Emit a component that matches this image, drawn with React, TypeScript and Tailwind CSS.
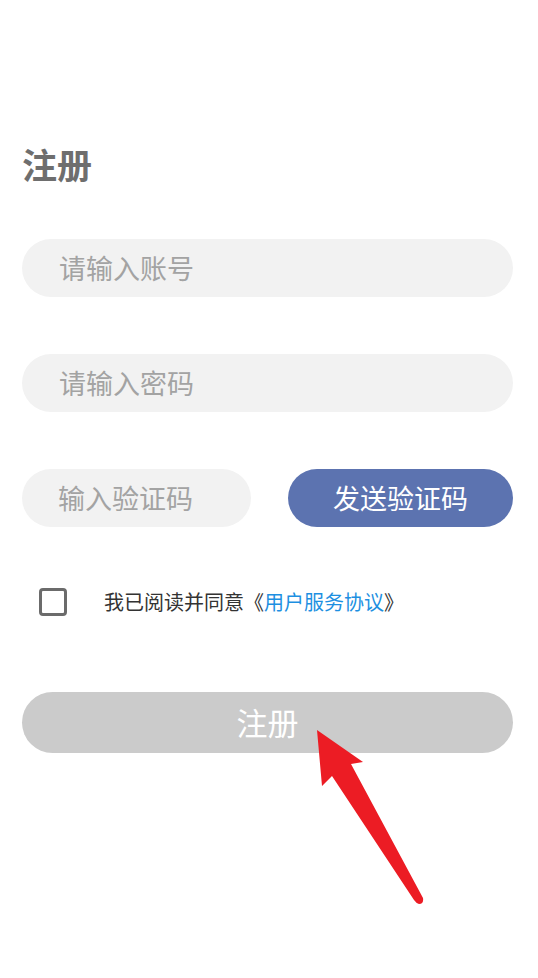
import React from "react";

const font = { fontFamily: '"Noto Sans CJK SC", "Noto Sans", sans-serif' };

export default function App() {
  return (
    <div className="relative w-[538px] h-[978px] bg-white overflow-hidden" style={font}>
      <div className="pl-[22px] pr-[25px] pt-[144px] flex flex-col">
        <div className="text-[35px] leading-[40px] font-bold text-[#6e6e6e]">注册</div>

        <div className="mt-[55px] h-[58px] rounded-full bg-[#f2f2f2] flex items-center pl-[37px] text-[27px] text-[#a3a3a3]">
          请输入账号
        </div>

        <div className="mt-[57px] h-[58px] rounded-full bg-[#f2f2f2] flex items-center pl-[37px] text-[27px] text-[#a3a3a3]">
          请输入密码
        </div>

        <div className="mt-[57px] flex gap-[37px]">
          <div className="w-[229px] h-[58px] rounded-full bg-[#f2f2f2] flex items-center pl-[36px] text-[27px] text-[#a3a3a3]">
            输入验证码
          </div>
          <div className="flex-1 h-[58px] rounded-full bg-[#5c73b0] flex items-center justify-center text-[27px] text-white">
            发送验证码
          </div>
        </div>

        <div className="mt-[61px] flex items-center h-[28px]">
          <div className="ml-[17px] w-[28px] h-[28px] rounded-[4px] border-[3px] border-[#6b6b6b]" />
          <div className="ml-[37px] text-[20px] text-[#333333] leading-[28px]">
            我已阅读并同意《<span className="text-[#1d8fe1]">用户服务协议</span>》
          </div>
        </div>

        <div className="mt-[76px] h-[61px] rounded-full bg-[#cbcbcb] flex items-center justify-center text-[31px] text-white">
          注册
        </div>
      </div>

      <svg className="absolute left-0 top-0" width="538" height="978" viewBox="0 0 538 978">
        <path
          d="M317 730 L363 762 L351 764 L423 898 Q424 904 419 904 Q416 903 414 900 L332 776 L322 786 Z"
          fill="#ec1c24"
        />
      </svg>
    </div>
  );
}
